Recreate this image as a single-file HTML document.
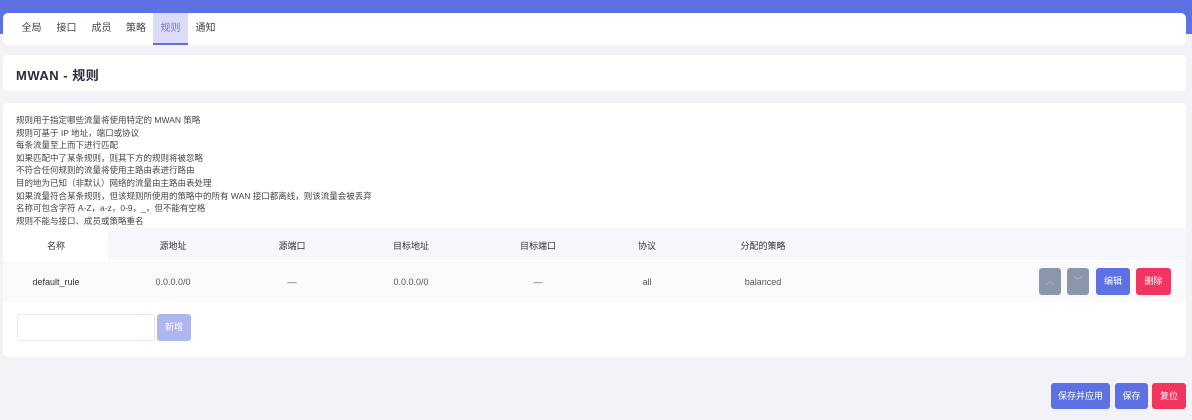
<!DOCTYPE html>
<html><head><meta charset="utf-8"><style>
*{margin:0;padding:0;box-sizing:border-box}
body{width:1192px;height:420px;background:#f3f3f7;font-family:"Liberation Sans","Noto Sans CJK SC",sans-serif;position:relative;overflow:hidden;color:#333}
.abs{position:absolute}
.top{left:0;top:0;width:1192px;height:34px;background:#5d71e2}
.card{background:#fff;border-radius:5px}
.tab{top:13px;height:32px;line-height:32px;font-size:10px;color:#444;text-align:center}
.c{position:absolute;transform:translateX(-50%);white-space:nowrap;font-size:9px}
.btn{position:absolute;border-radius:3px;color:#fff;font-size:9px;text-align:center}
</style></head><body>
<div class="abs top"></div>
<div class="abs card" style="left:3px;top:13px;width:1183px;height:32px"></div>
<div class="abs tab" style="left:14px;width:35px">全局</div>
<div class="abs tab" style="left:49px;width:35px">接口</div>
<div class="abs tab" style="left:84px;width:35px">成员</div>
<div class="abs tab" style="left:119px;width:34px">策略</div>
<div class="abs tab" style="left:153px;width:35px;background:#dcdcf8;color:#7a7ad0;border-bottom:2px solid #5d71e2">规则</div>
<div class="abs tab" style="left:188px;width:35px">通知</div>
<div class="abs card" style="left:3px;top:55px;width:1183px;height:36px"></div>
<div class="abs" style="left:16px;top:65px;font-size:13px;font-weight:bold;color:#2a2a3a;letter-spacing:0.5px">MWAN - 规则</div>
<div class="abs card" style="left:3px;top:103px;width:1183px;height:254px"></div>
<div class="abs" style="left:16px;top:114px;font-size:8.5px;line-height:12.6px;color:#444">规则用于指定哪些流量将使用特定的 MWAN 策略<br>规则可基于 IP 地址，端口或协议<br>每条流量至上而下进行匹配<br>如果匹配中了某条规则，则其下方的规则将被忽略<br>不符合任何规则的流量将使用主路由表进行路由<br>目的地为已知（非默认）网络的流量由主路由表处理<br>如果流量符合某条规则，但该规则所使用的策略中的所有 WAN 接口都离线，则该流量会被丢弃<br>名称可包含字符 A-Z，a-z，0-9，_，但不能有空格<br>规则不能与接口、成员或策略重名</div>
<div class="abs" style="left:108px;top:228px;width:1078px;height:32px;background:#f6f7fc"></div>
<div class="abs" style="left:3px;top:261px;width:1183px;height:41px;background:#fafafc"></div>
<div style="position:absolute;top:239px;left:0;width:100%;font-size:9px;color:#333">
<span class="c" style="left:56px">名称</span><span class="c" style="left:173px">源地址</span><span class="c" style="left:292px">源端口</span><span class="c" style="left:411px">目标地址</span><span class="c" style="left:538px">目标端口</span><span class="c" style="left:647px">协议</span><span class="c" style="left:763px">分配的策略</span></div>
<div style="position:absolute;top:277px;left:0;width:100%;color:#555">
<span class="c" style="left:56px;color:#333">default_rule</span><span class="c" style="left:173px">0.0.0.0/0</span><span class="c" style="left:292px">—</span><span class="c" style="left:411px">0.0.0.0/0</span><span class="c" style="left:538px">—</span><span class="c" style="left:647px">all</span><span class="c" style="left:763px">balanced</span></div>
<div class="btn" style="left:1039px;top:268px;width:22px;height:27px;background:#8a97ab;line-height:27px;color:#b0bac8">︿</div>
<div class="btn" style="left:1067px;top:268px;width:22px;height:27px;background:#8a97ab;line-height:27px;color:#b0bac8">﹀</div>
<div class="btn" style="left:1096px;top:268px;width:34px;height:27px;background:#5d71e2;line-height:27px">编辑</div>
<div class="btn" style="left:1136px;top:268px;width:35px;height:27px;background:#f0355f;line-height:27px">删除</div>
<div class="abs" style="left:17px;top:314px;width:138px;height:27px;border:1px solid #e6e6ee;border-radius:3px;background:#fff"></div>
<div class="btn" style="left:157px;top:314px;width:34px;height:27px;background:#aeb6ee;line-height:27px">新增</div>
<div class="btn" style="left:1051px;top:383px;width:59px;height:26px;background:#5d71e2;line-height:26px">保存并应用</div>
<div class="btn" style="left:1115px;top:383px;width:33px;height:26px;background:#5d71e2;line-height:26px">保存</div>
<div class="btn" style="left:1152px;top:383px;width:34px;height:26px;background:#f0355f;line-height:26px">复位</div>
</body></html>
